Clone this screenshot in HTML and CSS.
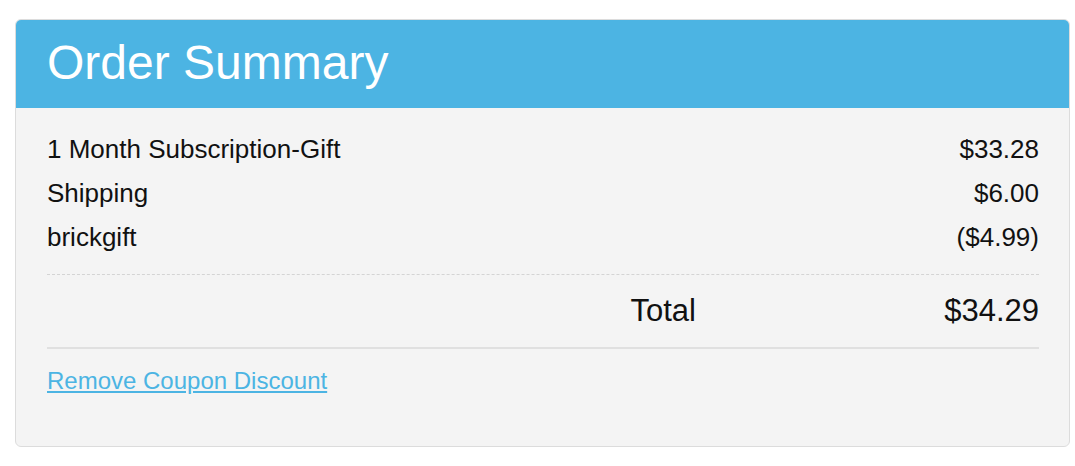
FILE: index.html
```html
<!DOCTYPE html>
<html lang="en">
<head>
    <meta charset="UTF-8">
    <meta name="viewport" content="width=device-width, initial-scale=1.0">
    <title>Order Summary</title>
    <link rel="stylesheet" href="styles.css">
</head>
<body>
    <div class="summary">
        <div class="summary-header">
            <h1>Order Summary</h1>
        </div>

        <div class="summary-body">
            <div class="line-items">
                <div class="line-item">
                    <span>1 Month Subscription-Gift</span>
                    <span>$33.28</span>
                </div>
                <div class="line-item">
                    <span>Shipping</span>
                    <span>$6.00</span>
                </div>
                <div class="line-item">
                    <span>brickgift</span>
                    <span>($4.99)</span>
                </div>
            </div>

            <div class="total-row">
                <span class="total-label">Total</span>
                <span class="total-value">$34.29</span>
            </div>

            <a href="#" class="coupon-link">Remove Coupon Discount</a>
        </div>
    </div>
</body>
</html>
```

FILE: styles.css
```css
* {
    margin: 0;
    padding: 0;
    box-sizing: border-box;
}

body {
    font-family: 'Liberation Sans', Arial, Helvetica, sans-serif;
    color: #111;
    background-color: #fff;
    padding: 19px 5px 0 15px;
}

.summary {
    border: 1px solid #dcdcdc;
    border-radius: 6px;
    overflow: hidden;
    background: #f4f4f4;
}

.summary-header {
    background: #4cb4e3;
    height: 88px;
    padding: 0 31px;
    display: flex;
    align-items: center;
}

.summary-header h1 {
    color: #fff;
    font-size: 48px;
    font-weight: 400;
    line-height: 1;
    margin-top: -2px;
}

.summary-body {
    padding: 19px 30px 48px 31px;
}

.line-item {
    display: flex;
    justify-content: space-between;
    font-size: 26px;
    line-height: 44px;
}

.line-items {
    padding-bottom: 15px;
    border-bottom: 1px dashed #d4d4d4;
}

.total-row {
    display: grid;
    grid-template-columns: 1fr 343px;
    font-size: 31px;
    line-height: 40px;
    padding: 16px 0;
    border-bottom: 2px solid #e0e0e0;
}

.total-label {
    text-align: right;
}

.total-value {
    text-align: right;
}

.coupon-link {
    display: inline-block;
    margin-top: 15px;
    font-size: 24px;
    line-height: 34px;
    color: #4cb4e3;
    text-decoration: underline;
}
```
